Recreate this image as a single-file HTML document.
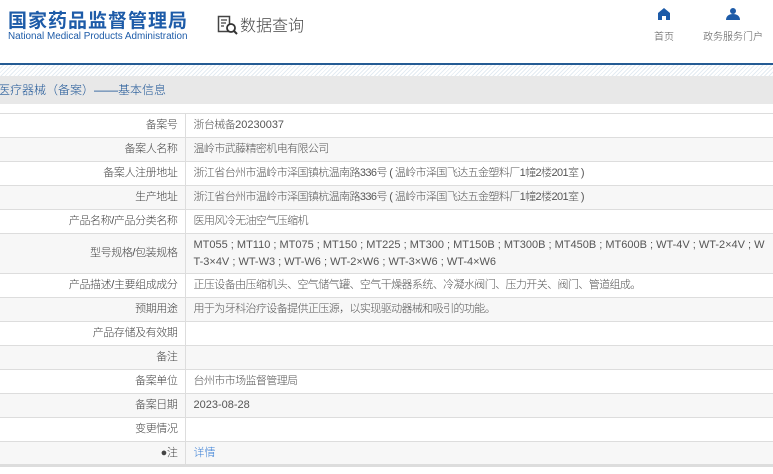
<!DOCTYPE html>
<html><head><meta charset="utf-8"><style>
*{margin:0;padding:0;box-sizing:border-box}
body{width:773px;height:474px;overflow:hidden;background:#fff;font-family:"Liberation Sans","Noto Sans CJK SC",sans-serif;color:#333;position:relative}
.logo1{position:absolute;left:8px;top:6px;font-size:19px;font-weight:bold;color:#1d5ba8;letter-spacing:1px;white-space:nowrap}
.logo2{position:absolute;left:8px;top:31px;font-size:9.9px;color:#1d5ba8;white-space:nowrap}
.dq{position:absolute;left:217px;top:12px;font-size:16px;color:#444;white-space:nowrap;font-weight:300}
.dq svg{vertical-align:-4px;margin-right:1px}
.nav{position:absolute;top:8px;font-size:10px;color:#555;text-align:center;font-weight:300}
.line{position:absolute;left:0;top:63px;width:773px;height:2px;background:#245b94}
.hatch{position:absolute;left:0;top:65px;width:773px;height:11px;background:repeating-linear-gradient(135deg,#fff 0 2px,#e3ebf2 2px 3px)}
.bar{position:absolute;left:0;top:76px;width:773px;height:28px;background:#e8e8e8;font-size:12px;color:#1d5596;line-height:28px;text-indent:-2px;white-space:nowrap;font-weight:300}
table{position:absolute;left:0;top:113px;width:773px;border-collapse:collapse;font-size:11px;font-weight:300}
td{border-top:1px solid #ddd;border-bottom:1px solid #ddd;height:24px;vertical-align:middle;line-height:17px}
td.l{width:185px;text-align:right;padding-right:7px;border-right:1px solid #ddd;color:#444;letter-spacing:-0.4px}
td.v{padding-left:8px;color:#555;padding-right:6px}
.c{letter-spacing:-0.6px}
tr:nth-child(even) td{background:#f7f7f7}
tr.last td{border-bottom:3px solid #ddd}
a{color:#3a7fd5;text-decoration:none}
</style></head><body>
<div class="logo1">国家药品监督管理局</div>
<div class="logo2">National Medical Products Administration</div>
<div class="dq"><svg width="22" height="20" viewBox="0 0 22 20"><rect x="1.5" y="1.5" width="11" height="15" fill="none" stroke="#444" stroke-width="1.5"/><path d="M4 5h6M4 8h5M4 11h3" stroke="#444" stroke-width="1.3"/><circle cx="14" cy="13" r="4" fill="#fff" stroke="#333" stroke-width="1.8"/><path d="M17 16l3 3" stroke="#333" stroke-width="2"/></svg>数据查询</div>
<div class="nav" style="left:650px;width:28px"><svg width="12" height="12" viewBox="0 0 12 12"><path d="M6 0L0 5v7h4V8h4v4h4V5z" fill="#1d5ba8"/></svg><div style="margin-top:5px">首页</div></div>
<div class="nav" style="left:702px;width:62px"><svg width="14" height="12" viewBox="0 0 14 12"><circle cx="7" cy="3" r="3" fill="#1d5ba8"/><path d="M0 12c0-4 3-6 7-6s7 2 7 6z" fill="#1d5ba8"/></svg><div style="margin-top:5px">政务服务门户</div></div>
<div class="line"></div><div class="hatch"></div>
<div class="bar">医疗器械（备案）——基本信息</div>
<table>
<tr><td class="l">备案号</td><td class="v"><span class="c">浙台械备</span>20230037</td></tr>
<tr><td class="l">备案人名称</td><td class="v c">温岭市武藤精密机电有限公司</td></tr>
<tr><td class="l">备案人注册地址</td><td class="v c">浙江省台州市温岭市泽国镇杭温南路336号 ( 温岭市泽国飞达五金塑料厂1幢2楼201室 )</td></tr>
<tr><td class="l">生产地址</td><td class="v c">浙江省台州市温岭市泽国镇杭温南路336号 ( 温岭市泽国飞达五金塑料厂1幢2楼201室 )</td></tr>
<tr><td class="l">产品名称/产品分类名称</td><td class="v c">医用风冷无油空气压缩机</td></tr>
<tr><td class="l" style="height:40px">型号规格/包装规格</td><td class="v" style="word-break:break-all">MT055 ; MT110 ; MT075 ; MT150 ; MT225 ; MT300 ; MT150B ; MT300B ; MT450B ; MT600B ; WT-4V ; WT-2×4V ; WT-3×4V ; WT-W3 ; WT-W6 ; WT-2×W6 ; WT-3×W6 ; WT-4×W6</td></tr>
<tr><td class="l">产品描述/主要组成成分</td><td class="v c">正压设备由压缩机头、空气储气罐、空气干燥器系统、冷凝水阀门、压力开关、阀门、管道组成。</td></tr>
<tr><td class="l">预期用途</td><td class="v c">用于为牙科治疗设备提供正压源，以实现驱动器械和吸引的功能。</td></tr>
<tr><td class="l">产品存储及有效期</td><td class="v"></td></tr>
<tr><td class="l">备注</td><td class="v"></td></tr>
<tr><td class="l">备案单位</td><td class="v c">台州市市场监督管理局</td></tr>
<tr><td class="l">备案日期</td><td class="v">2023-08-28</td></tr>
<tr><td class="l">变更情况</td><td class="v"></td></tr>
<tr class="last"><td class="l">●注</td><td class="v"><a>详情</a></td></tr>
</table>
</body></html>
